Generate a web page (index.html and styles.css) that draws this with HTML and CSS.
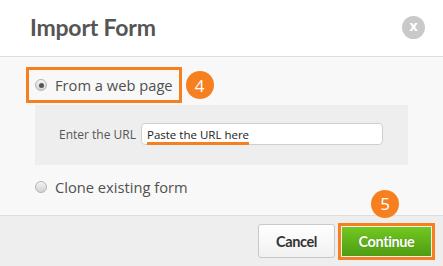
FILE: index.html
```html
<!DOCTYPE html>
<html lang="en">
  <head>
    <meta charset="UTF-8" />
    <title>Import Form</title>
    <link rel="stylesheet" href="styles.css">
  </head>
  <body>
    <div class="dialog">
      <!-- ===== HEADER ===== -->
      <header class="dlg-head">
        <h1>Import Form</h1>
        <button class="close-btn" aria-label="close">x</button>
      </header>

      <!-- ===== BODY ===== -->
      <section class="dlg-body">
        <div class="opt-line">
          <label class="hl-box">
            <span class="radio checked"></span>
            <span class="opt-text">From a web page</span>
          </label>
          <span class="badge">4</span>
        </div>

        <div class="url-panel">
          <span class="url-label">Enter the URL</span>
          <div class="url-input">
            <span class="url-ph">Paste the URL here</span>
          </div>
        </div>

        <label class="opt-plain">
          <span class="radio"></span>
          <span class="opt-text">Clone existing form</span>
        </label>
      </section>

      <!-- ===== FOOTER ===== -->
      <footer class="dlg-foot">
        <button class="btn btn-cancel">Cancel</button>
        <div class="continue-wrap">
          <span class="badge badge-float">5</span>
          <button class="btn btn-continue">Continue</button>
        </div>
      </footer>
    </div>
  </body>
</html>
```

FILE: styles.css
```css
:root{
  --c-orange:#f6801f;
  --c-text:#555;
  --c-line:#dcdcdc;
}
*,*::before,*::after{box-sizing:border-box;margin:0;padding:0}
html,body{height:100%;background:#fff;font-family:"Open Sans",sans-serif;color:var(--c-text);overflow:hidden}
button{font-family:inherit;cursor:pointer}

.dialog{height:266px;display:flex;flex-direction:column}

/* ===== HEADER ===== */
.dlg-head{height:57px;flex:none;display:flex;align-items:center;justify-content:space-between;padding:0 18px 2px 30px;border-bottom:1px solid var(--c-line);background:#fff}
.dlg-head h1{font-family:Lato,sans-serif;font-size:23px;font-weight:700;color:#555;letter-spacing:-0.2px}
.close-btn{width:23px;height:23px;border-radius:50%;border:none;background:#c9c9c9;color:#fff;font-weight:700;font-size:14px;line-height:20px;display:grid;place-items:center;padding-bottom:3px}

/* ===== BODY ===== */
.dlg-body{flex:none;height:158px;background:#f8f8f8;padding:10px 0 0 26px}
.opt-line{display:flex;align-items:center;gap:4px}
.hl-box{display:flex;align-items:center;gap:8px;height:36px;padding:0 6px;border:3px solid var(--c-orange)}
.opt-text{font-size:14.7px;color:#505050}

.radio{width:12px;height:12px;border-radius:50%;border:1px solid #b4b4b4;background:linear-gradient(#f4f4f4,#d2d2d2);display:grid;place-items:center;flex:none}
.radio.checked::after{content:"";width:5px;height:5px;border-radius:50%;background:#555}

.badge{width:28px;height:28px;border-radius:50%;background:var(--c-orange);color:#fff;font-size:17px;display:grid;place-items:center;line-height:1}

.url-panel{width:373px;height:60px;margin:2px 0 0 9px;background:#eee;display:flex;align-items:center;gap:5px;padding:0 25px 2px 24px}
.url-label{font-size:12px;color:#555}
.url-input{flex:1;height:22px;background:#fff;border:1px solid #cfcfcf;border-radius:4px;display:flex;align-items:center;padding:0 5px}
.url-ph{font-size:11.5px;color:#222;border-bottom:3px solid var(--c-orange);line-height:15px;margin-top:3px}

.opt-plain{display:flex;align-items:center;gap:8px;margin:12px 0 0 9px}

/* ===== FOOTER ===== */
.dlg-foot{flex:1;border-top:1px solid var(--c-line);background:#eee;display:flex;align-items:center;justify-content:flex-end;gap:3px;padding:0 8px 0 0}
.btn{font-family:Lato,sans-serif;font-size:14.5px;font-weight:700;letter-spacing:-0.4px;border-radius:3px}
.btn-cancel{width:77px;height:34px;border:1px solid #c8c8c8;background:linear-gradient(#fff,#f1f1f1);color:#333}
.continue-wrap{position:relative;border:3px solid var(--c-orange);padding:1px}
.btn-continue{display:block;width:89px;height:29px;border:none;border-radius:0;background:linear-gradient(#72c81f,#4f9c14);color:#fff;text-shadow:0 0 1px #3a7a0c}
.badge-float{position:absolute;left:30px;top:-36px}
```
